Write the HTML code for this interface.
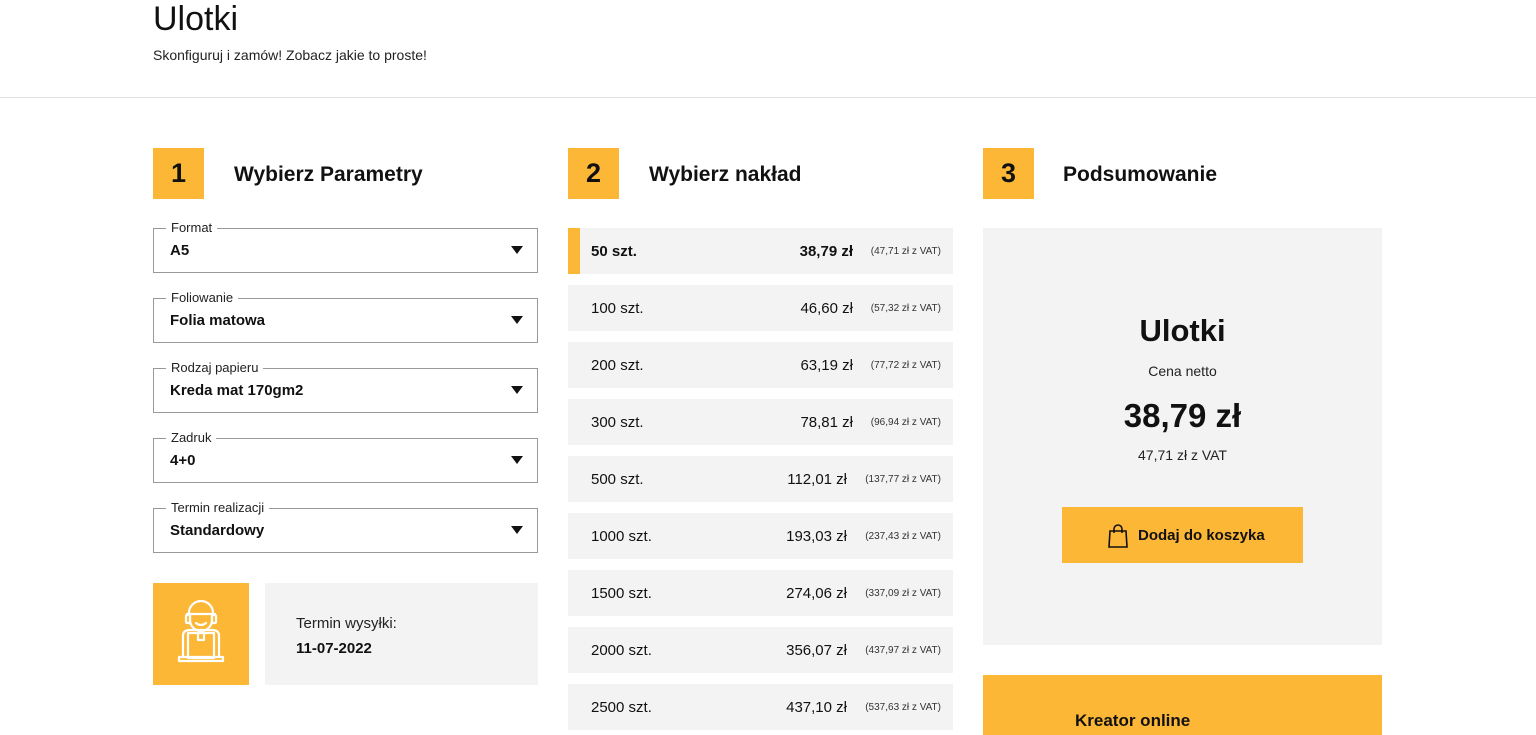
<!DOCTYPE html><html><head><meta charset="utf-8"><style>
*{box-sizing:border-box;margin:0;padding:0}
body{width:1536px;height:722px;overflow:hidden;background:#fff;font-family:"Liberation Sans",sans-serif;color:#111;position:relative}
.a{position:absolute}
.badge{position:absolute;width:51px;height:51px;background:#fdb736;font-size:27px;font-weight:bold;text-align:center;line-height:51px}
.h{position:absolute;font-size:21px;font-weight:bold;top:163px}
.sel{position:absolute;left:153px;width:385px;height:45px;border:1px solid #999}
.sel .l{position:absolute;top:-9px;left:12px;background:#fff;padding:0 5px;font-size:13px;color:#222}
.sel .v{position:absolute;left:16px;top:13px;font-size:15px;font-weight:bold}
.sel .t{position:absolute;right:14px;top:17px;width:0;height:0;border-left:6px solid transparent;border-right:6px solid transparent;border-top:8px solid #111}
.row{position:absolute;left:568px;width:385px;height:46px;background:#f3f3f3;font-size:15px}
.row .q{position:absolute;left:23px;top:15px}
.row .p{position:absolute;right:100px;top:15px}
.row .n{position:absolute;right:12px;top:18px;font-size:10px;color:#333}
</style></head><body>
<div class="a" style="left:153px;top:0px;font-size:34px">Ulotki</div>
<div class="a" style="left:153px;top:47px;font-size:14px;color:#222">Skonfiguruj i zamów! Zobacz jakie to proste!</div>
<div class="a" style="left:0;top:97px;width:1536px;height:1px;background:#e2e2e2"></div>

<div class="badge" style="left:153px;top:148px">1</div><div class="h" style="left:234px">Wybierz Parametry</div>
<div class="badge" style="left:568px;top:148px">2</div><div class="h" style="left:649px">Wybierz nakład</div>
<div class="badge" style="left:983px;top:148px">3</div><div class="h" style="left:1063px">Podsumowanie</div>

<div class="sel" style="top:228px"><span class="l">Format</span><span class="v">A5</span><span class="t"></span></div>
<div class="sel" style="top:298px"><span class="l">Foliowanie</span><span class="v">Folia matowa</span><span class="t"></span></div>
<div class="sel" style="top:368px"><span class="l">Rodzaj papieru</span><span class="v">Kreda mat 170gm2</span><span class="t"></span></div>
<div class="sel" style="top:438px"><span class="l">Zadruk</span><span class="v">4+0</span><span class="t"></span></div>
<div class="sel" style="top:508px"><span class="l">Termin realizacji</span><span class="v">Standardowy</span><span class="t"></span></div>

<div class="a" style="left:153px;top:583px;width:96px;height:102px;background:#fdb736">
<svg width="96" height="102" viewBox="0 0 96 102" fill="none" stroke="#fff" stroke-width="2.2" stroke-linecap="round" stroke-linejoin="round">
<path d="M36 30 a12 12 0 0 1 24 0 M34 31 h28"/><path d="M37 31 v6 a11 11 0 0 0 22 0 v-6"/><rect x="33" y="32" width="4" height="8" rx="1"/><rect x="59" y="32" width="4" height="8" rx="1"/>
<path d="M43 40 q5 4 10 0"/><path d="M30 53 q0-6 7-6 h22 q7 0 7 6"/><rect x="35" y="50" width="26" height="25"/><path d="M45 50 v7 h6 v-7"/><path d="M30 53 v21 M66 53 v21 M26 74 h44 v4 h-44 z"/>
</svg></div>
<div class="a" style="left:265px;top:583px;width:273px;height:102px;background:#f3f3f3">
<div class="a" style="left:31px;top:32px;font-size:15px;color:#222">Termin wysyłki:</div>
<div class="a" style="left:31px;top:57px;font-size:15px;font-weight:bold">11-07-2022</div></div>

<div class="row" style="top:228px"><div class="a" style="left:0;top:0;width:12px;height:46px;background:#fdb736"></div><span class="q" style="font-weight:bold">50 szt.</span><span class="p" style="font-weight:bold">38,79 zł</span><span class="n">(47,71 zł z VAT)</span></div>
<div class="row" style="top:285px"><span class="q">100 szt.</span><span class="p">46,60 zł</span><span class="n">(57,32 zł z VAT)</span></div>
<div class="row" style="top:342px"><span class="q">200 szt.</span><span class="p">63,19 zł</span><span class="n">(77,72 zł z VAT)</span></div>
<div class="row" style="top:399px"><span class="q">300 szt.</span><span class="p">78,81 zł</span><span class="n">(96,94 zł z VAT)</span></div>
<div class="row" style="top:456px"><span class="q">500 szt.</span><span class="p" style="right:106px">112,01 zł</span><span class="n">(137,77 zł z VAT)</span></div>
<div class="row" style="top:513px"><span class="q">1000 szt.</span><span class="p" style="right:106px">193,03 zł</span><span class="n">(237,43 zł z VAT)</span></div>
<div class="row" style="top:570px"><span class="q">1500 szt.</span><span class="p" style="right:106px">274,06 zł</span><span class="n">(337,09 zł z VAT)</span></div>
<div class="row" style="top:627px"><span class="q">2000 szt.</span><span class="p" style="right:106px">356,07 zł</span><span class="n">(437,97 zł z VAT)</span></div>
<div class="row" style="top:684px"><span class="q">2500 szt.</span><span class="p" style="right:106px">437,10 zł</span><span class="n">(537,63 zł z VAT)</span></div>

<div class="a" style="left:983px;top:228px;width:399px;height:417px;background:#f3f3f3;text-align:center">
<div class="a" style="left:0;width:399px;top:85px;font-size:31px;font-weight:bold">Ulotki</div>
<div class="a" style="left:0;width:399px;top:135px;font-size:14px;color:#222">Cena netto</div>
<div class="a" style="left:0;width:399px;top:169px;font-size:33px;font-weight:bold">38,79 zł</div>
<div class="a" style="left:0;width:399px;top:219px;font-size:14px;color:#222">47,71 zł z VAT</div>
<div class="a" style="left:79px;top:279px;width:241px;height:56px;background:#fdb736">
<svg class="a" style="left:46px;top:17px" width="20" height="24" viewBox="0 0 20 24" fill="none" stroke="#111" stroke-width="1.6"><path d="M2 7 h16 l1 16 h-18 z"/><path d="M6 9 v-4 a4 4 0 0 1 8 0 v4"/></svg>
<div class="a" style="left:76px;top:20px;font-size:15px;font-weight:bold">Dodaj do koszyka</div></div>
</div>
<div class="a" style="left:983px;top:675px;width:399px;height:60px;background:#fdb736">
<div class="a" style="left:92px;top:36px;font-size:17px;font-weight:bold">Kreator online</div></div>
</body></html>
